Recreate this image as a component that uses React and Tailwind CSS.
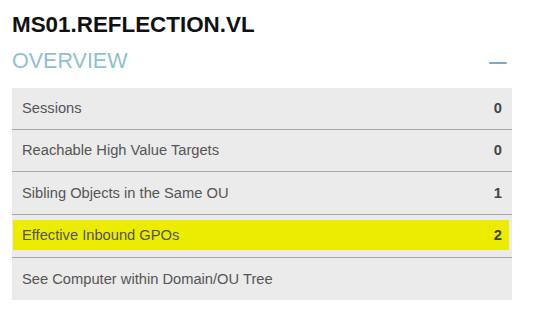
export default function App() {
  const rows = [
    { label: 'Sessions', value: '0', h: 'h-[42px]' },
    { label: 'Reachable High Value Targets', value: '0', h: 'h-[42px]' },
    { label: 'Sibling Objects in the Same OU', value: '1', h: 'h-[43px]' },
    { label: 'Effective Inbound GPOs', value: '2', h: 'h-[43px]', highlight: true },
    { label: 'See Computer within Domain/OU Tree', value: '', h: 'h-[42px]' },
  ];

  return (
    <div className="bg-white min-h-screen w-[533px] h-[318px] overflow-hidden font-['Liberation_Sans',Arial,sans-serif]">
      <div className="pl-[12px] w-[512px]">
        <h1 className="pt-[14px] text-[22.4px] leading-[22px] font-bold text-[#111]">MS01.REFLECTION.VL</h1>

        {/* Section header */}
        <div className="mt-[15px] h-[21px] flex items-center justify-between">
          <span className="text-[21.5px] leading-[21px] text-[#8fbfd3]">OVERVIEW</span>
          <span className="block w-[18px] h-[2px] mr-[5px] mt-[2px] bg-[#7aa9c2] rounded-sm" />
        </div>

        {/* Overview table */}
        <div className="mt-[16px] bg-[#ebebeb] text-[14.7px] text-[#555]">
          {rows.map((r, i) => (
            <div
              key={r.label}
              className={`${r.h} flex ${i < rows.length - 1 ? 'border-b border-[#a9a9a9]' : ''} ${
                r.highlight ? 'pt-[5px] pb-[7px] pl-[1px] pr-[3px]' : 'items-center justify-between pl-[10px] pr-[10px]'
              }`}
            >
              {r.highlight ? (
                <div className="flex-1 bg-[#ecec00] flex items-center justify-between pl-[9px] pr-[7px]">
                  <span>{r.label}</span>
                  <span className="font-bold text-[#444]">{r.value}</span>
                </div>
              ) : (
                <>
                  <span>{r.label}</span>
                  <span className="font-bold text-[#444]">{r.value}</span>
                </>
              )}
            </div>
          ))}
        </div>
      </div>
    </div>
  );
}
